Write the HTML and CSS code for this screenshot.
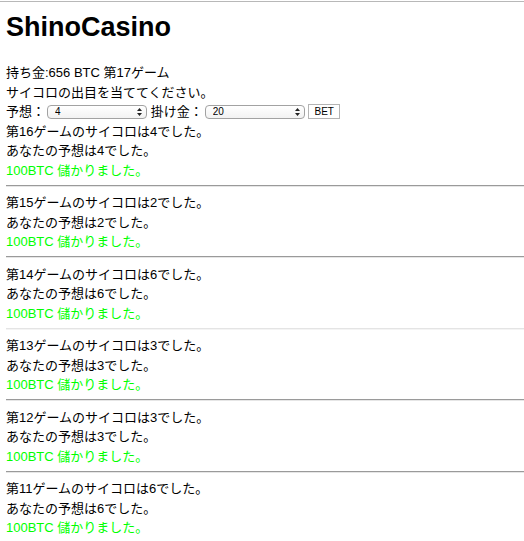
FILE: index.html
```html
<!DOCTYPE html>
<html lang="ja">
<head>
  <meta charset="UTF-8" />
  <title>ShinoCasino</title>
  <link rel="stylesheet" href="styles.css">
</head>
<body>
  <div class="top-line"></div>
  <div class="page">
    <h1>ShinoCasino</h1>
    <p>持ち金:656 BTC 第17ゲーム</p>
    <p>サイコロの出目を当ててください。</p>
    <form class="bet-form">予想：<span class="select-wrap"><select name="guess">
          <option>1</option><option>2</option><option>3</option>
          <option selected>4</option><option>5</option><option>6</option>
        </select><svg class="arrows" width="5" height="8" viewBox="0 0 5 8"><path d="M2.5 0 L5 3 L0 3 Z M0 5 L5 5 L2.5 8 Z" fill="#222"/></svg></span> 掛け金：<span class="select-wrap"><select name="bet">
          <option>10</option><option selected>20</option><option>50</option><option>100</option>
        </select><svg class="arrows" width="5" height="8" viewBox="0 0 5 8"><path d="M2.5 0 L5 3 L0 3 Z M0 5 L5 5 L2.5 8 Z" fill="#222"/></svg></span> <button type="submit">BET</button></form>

    <div class="result">
      <p>第16ゲームのサイコロは4でした。</p>
      <p>あなたの予想は4でした。</p>
      <p class="win">100BTC 儲かりました。</p>
    </div>
    <hr>
    <div class="result">
      <p>第15ゲームのサイコロは2でした。</p>
      <p>あなたの予想は2でした。</p>
      <p class="win">100BTC 儲かりました。</p>
    </div>
    <hr>
    <div class="result">
      <p>第14ゲームのサイコロは6でした。</p>
      <p>あなたの予想は6でした。</p>
      <p class="win">100BTC 儲かりました。</p>
    </div>
    <hr class="faint">
    <div class="result">
      <p>第13ゲームのサイコロは3でした。</p>
      <p>あなたの予想は3でした。</p>
      <p class="win">100BTC 儲かりました。</p>
    </div>
    <hr>
    <div class="result">
      <p>第12ゲームのサイコロは3でした。</p>
      <p>あなたの予想は3でした。</p>
      <p class="win">100BTC 儲かりました。</p>
    </div>
    <hr>
    <div class="result">
      <p>第11ゲームのサイコロは6でした。</p>
      <p>あなたの予想は6でした。</p>
      <p class="win">100BTC 儲かりました。</p>
    </div>
  </div>
</body>
</html>
```

FILE: styles.css
```css
* {
  box-sizing: border-box;
  margin: 0;
  padding: 0;
}

body {
  font-family: 'Liberation Sans', 'Noto Sans CJK JP', sans-serif;
  font-size: 13px;
  line-height: 19.5px;
  color: #000;
  background-color: #fff;
}

.top-line {
  margin-top: 1px;
  height: 1px;
  background-color: #b8b8b8;
}

.page {
  padding-left: 6px;
}

h1 {
  font-size: 27px;
  line-height: 32px;
  font-weight: bold;
  margin: 9px 0 20px;
}

.bet-form {
  white-space: nowrap;
}

/* Small rounded select boxes */
.select-wrap {
  position: relative;
  display: inline-block;
  vertical-align: middle;
  height: 14px;
  margin: -2px 0 0 2px;
}

.select-wrap select {
  appearance: none;
  -webkit-appearance: none;
  width: 100px;
  height: 14px;
  padding: 0 0 0 7px;
  border: 1px solid #a2a2a2;
  border-radius: 4px;
  background: linear-gradient(#ffffff, #f2f2f2);
  font-family: 'Liberation Sans', sans-serif;
  font-size: 10px;
  line-height: 12px;
  color: #000;
  display: block;
}

.select-wrap .arrows {
  position: absolute;
  right: 5px;
  top: 3px;
  pointer-events: none;
}

.bet-form button {
  vertical-align: middle;
  margin-top: -2px;
  width: 32px;
  height: 15px;
  border: 1px solid #b4b4b4;
  background-color: #fff;
  font-family: 'Liberation Sans', sans-serif;
  font-size: 10px;
  line-height: 13px;
  color: #000;
}

.win {
  color: #00ff00;
}

hr {
  border: none;
  border-top: 1px solid #9a9a9a;
  border-bottom: 1px solid #e6e6e6;
  margin: 4.5px 0 6.5px;
}

hr.faint {
  border-top-color: #e4e4e4;
  border-bottom-color: #f4f4f4;
}
```
